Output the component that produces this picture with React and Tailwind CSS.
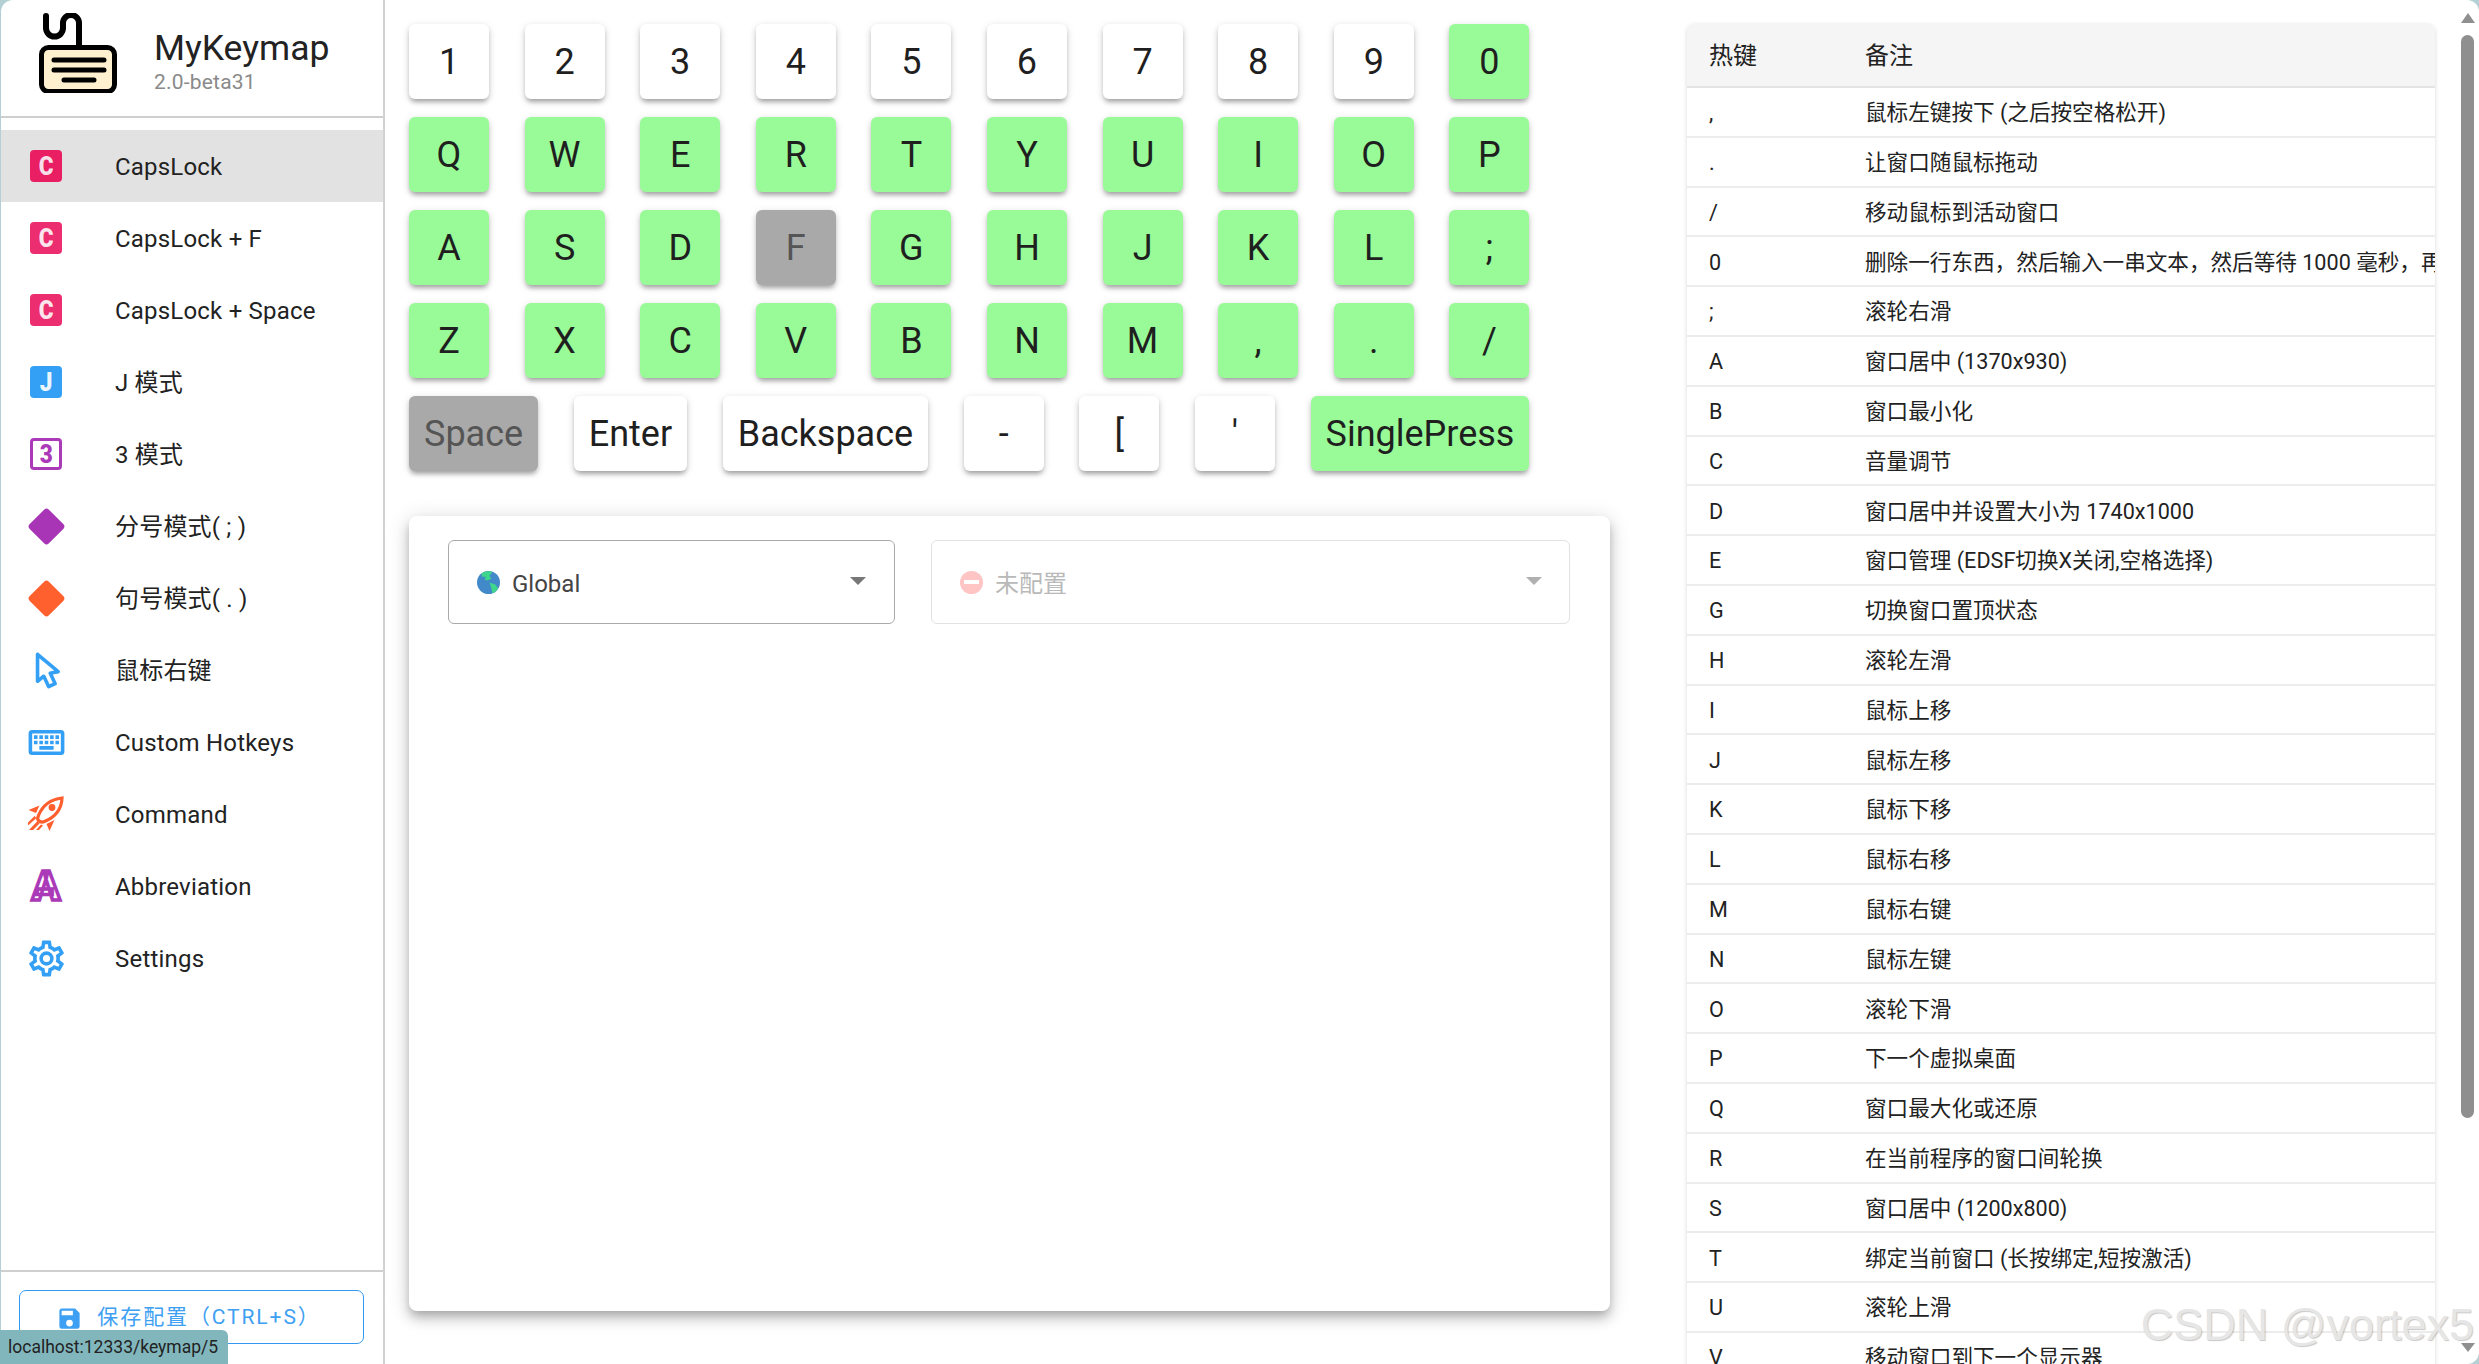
import React from 'react'

const mdi = {
  rhombus: 'M21.5 10.8L13.2 2.5C12.5 1.8 11.5 1.8 10.8 2.5L2.5 10.8C1.8 11.5 1.8 12.5 2.5 13.2L10.8 21.5C11.5 22.2 12.5 22.2 13.2 21.5L21.5 13.2C22.2 12.5 22.2 11.5 21.5 10.8Z',
  cursor: 'M10.07,14.27C10.57,14.03 11.16,14.25 11.4,14.75L13.7,19.74L15.5,18.89L13.19,13.91C12.95,13.41 13.17,12.81 13.67,12.58L13.95,12.5L16.25,12.05L8,5.12V15.9L9.82,14.43L10.07,14.27M13.64,21.97C13.14,22.21 12.54,22 12.31,21.5L10.13,16.76L7.62,18.78C7.45,18.92 7.24,19 7,19A1,1 0 0,1 6,18V3A1,1 0 0,1 7,2C7.24,2 7.47,2.09 7.64,2.23L7.65,2.22L19.14,11.86C19.57,12.22 19.62,12.85 19.27,13.27C19.12,13.45 18.91,13.57 18.7,13.61L15.54,14.23L17.74,18.96C18,19.46 17.76,20.05 17.26,20.28L13.64,21.97Z',
  keyboard: 'M4,5A2,2 0 0,0 2,7V17A2,2 0 0,0 4,19H20A2,2 0 0,0 22,17V7A2,2 0 0,0 20,5H4M4,7H20V17H4V7M5,8V10H7V8H5M8,8V10H10V8H8M11,8V10H13V8H11M14,8V10H16V8H14M17,8V10H19V8H17M5,11V13H7V11H5M8,11V13H10V11H8M11,11V13H13V11H11M14,11V13H16V11H14M17,11V13H19V11H17M8,14V16H16V14H8Z',
  cog: 'M12,8A4,4 0 0,1 16,12A4,4 0 0,1 12,16A4,4 0 0,1 8,12A4,4 0 0,1 12,8M12,10A2,2 0 0,0 10,12A2,2 0 0,0 12,14A2,2 0 0,0 14,12A2,2 0 0,0 12,10M10,22C9.75,22 9.54,21.82 9.5,21.58L9.13,18.93C8.5,18.68 7.96,18.34 7.44,17.94L4.95,18.95C4.73,19.03 4.46,18.95 4.34,18.73L2.34,15.27C2.21,15.05 2.27,14.78 2.46,14.63L4.57,12.97L4.5,12L4.57,11L2.46,9.37C2.27,9.22 2.21,8.95 2.34,8.73L4.34,5.27C4.46,5.05 4.73,4.96 4.95,5.05L7.44,6.05C7.96,5.66 8.5,5.32 9.13,5.07L9.5,2.42C9.54,2.18 9.75,2 10,2H14C14.25,2 14.46,2.18 14.5,2.42L14.87,5.07C15.5,5.32 16.04,5.66 16.56,6.05L19.05,5.05C19.27,4.96 19.54,5.05 19.66,5.27L21.66,8.73C21.79,8.95 21.73,9.22 21.54,9.37L19.43,11L19.5,12L19.43,13L21.54,14.63C21.73,14.78 21.79,15.05 21.66,15.27L19.66,18.73C19.54,18.95 19.27,19.04 19.05,18.95L16.56,17.95C16.04,18.34 15.5,18.68 14.87,18.93L14.5,21.58C14.46,21.82 14.25,22 14,22H10M11.25,4L10.88,6.61C9.68,6.86 8.62,7.5 7.85,8.39L5.44,7.35L4.69,8.65L6.8,10.2C6.4,11.37 6.4,12.64 6.8,13.8L4.68,15.36L5.43,16.66L7.86,15.62C8.63,16.5 9.68,17.14 10.87,17.38L11.24,20H12.76L13.13,17.39C14.32,17.14 15.37,16.5 16.14,15.62L18.57,16.66L19.32,15.36L17.2,13.81C17.6,12.64 17.6,11.37 17.2,10.2L19.31,8.65L18.56,7.35L16.15,8.39C15.38,7.5 14.32,6.86 13.12,6.62L12.75,4H11.25Z',
  save: 'M15,9H5V5H15M12,19A3,3 0 0,1 9,16A3,3 0 0,1 12,13A3,3 0 0,1 15,16A3,3 0 0,1 12,19M17,3H5C3.89,3 3,3.9 3,5V19A2,2 0 0,0 5,21H19A2,2 0 0,0 21,19V7L17,3Z',
}

function Mdi({ d, className }) {
  return (
    <svg viewBox="0 0 24 24" className={className} fill="currentColor">
      <path d={d} />
    </svg>
  )
}

function LetterBox({ letter, className }) {
  return (
    <div className={`flex h-8 w-8 items-center justify-center rounded-[4px] ${className}`}>
      <span className="scale-x-90 text-[25px] font-black leading-none">{letter}</span>
    </div>
  )
}

function Rocket() {
  return (
    <svg viewBox="0 0 36 36" className="h-9 w-9 text-[#ff5f2e]" fill="none" stroke="currentColor">
      <path strokeWidth="3.2" d="M10.500 24.500C9.500 23.500 9.500 21.500 10.500 19.500C14 11 21 3.500 34 2C33.500 15 25 22 16.500 25.500C14 26.500 11.500 25.500 10.500 24.500Z" />
      <circle cx="24" cy="11.500" r="3.400" fill="currentColor" stroke="none" />
      <path fill="currentColor" stroke="none" d="M11.500 9.500L0.500 14L8 17ZM26.500 24L21.500 35L18.500 28ZM6.500 20L0 26.500V29.500L8.500 22ZM9.500 25L1 34H5L11.500 27.500ZM13 28.500L8 34H11L15 29.500Z" />
    </svg>
  )
}

const menu = [
  { label: 'CapsLock', icon: <LetterBox letter="C" className="bg-[#e91e63] text-[#f6dfe8]" />, active: true },
  { label: 'CapsLock + F', icon: <LetterBox letter="C" className="bg-[#ec2d6f] text-[#fbe6ee]" /> },
  { label: 'CapsLock + Space', icon: <LetterBox letter="C" className="bg-[#ec2d6f] text-[#fbe6ee]" /> },
  { label: 'J 模式', icon: <LetterBox letter="J" className="bg-[#33a0f5] text-[#eaf5fe]" /> },
  { label: '3 模式', icon: <LetterBox letter="3" className="border-[3px] border-[#ab3ab9] text-[#ab3ab9]" /> },
  { label: '分号模式( ; )', icon: <Mdi d={mdi.rhombus} className="h-[43px] w-[43px] text-[#a735b5]" /> },
  { label: '句号模式( . )', icon: <Mdi d={mdi.rhombus} className="h-[43px] w-[43px] text-[#ff602d]" /> },
  { label: '鼠标右键', icon: <Mdi d={mdi.cursor} className="h-[43px] w-[43px] text-[#33a0f5]" /> },
  { label: 'Custom Hotkeys', icon: <Mdi d={mdi.keyboard} className="h-[43px] w-[43px] text-[#33a0f5]" /> },
  { label: 'Command', icon: <Rocket /> },
  {
    label: 'Abbreviation',
    icon: (
      <span className="text-[41px] font-black leading-none text-white [-webkit-text-stroke:3.5px_#ab3ab9]">A</span>
    ),
  },
  { label: 'Settings', icon: <Mdi d={mdi.cog} className="h-[43px] w-[43px] text-[#33a0f5]" /> },
]

const keyRows = [
  ['1', '2', '3', '4', '5', '6', '7', '8', '9', '0'],
  ['Q', 'W', 'E', 'R', 'T', 'Y', 'U', 'I', 'O', 'P'],
  ['A', 'S', 'D', 'F', 'G', 'H', 'J', 'K', 'L', ';'],
  ['Z', 'X', 'C', 'V', 'B', 'N', 'M', ',', '.', '/'],
  ['Space', 'Enter', 'Backspace', '-', '[', "'", 'SinglePress'],
]

const whiteKeys = ['1', '2', '3', '4', '5', '6', '7', '8', '9', 'Enter', 'Backspace', '-', '[', "'"]
const grayKeys = ['F', 'Space']

const hotkeys = [
  [',', '鼠标左键按下 (之后按空格松开)'],
  ['.', '让窗口随鼠标拖动'],
  ['/', '移动鼠标到活动窗口'],
  ['0', '删除一行东西，然后输入一串文本，然后等待 1000 毫秒，再'],
  [';', '滚轮右滑'],
  ['A', '窗口居中 (1370x930)'],
  ['B', '窗口最小化'],
  ['C', '音量调节'],
  ['D', '窗口居中并设置大小为 1740x1000'],
  ['E', '窗口管理 (EDSF切换X关闭,空格选择)'],
  ['G', '切换窗口置顶状态'],
  ['H', '滚轮左滑'],
  ['I', '鼠标上移'],
  ['J', '鼠标左移'],
  ['K', '鼠标下移'],
  ['L', '鼠标右移'],
  ['M', '鼠标右键'],
  ['N', '鼠标左键'],
  ['O', '滚轮下滑'],
  ['P', '下一个虚拟桌面'],
  ['Q', '窗口最大化或还原'],
  ['R', '在当前程序的窗口间轮换'],
  ['S', '窗口居中 (1200x800)'],
  ['T', '绑定当前窗口 (长按绑定,短按激活)'],
  ['U', '滚轮上滑'],
  ['V', '移动窗口到下一个显示器'],
]

function Key({ label }) {
  let color = 'bg-[#98fb98] text-[#1f1f1f]'
  if (whiteKeys.includes(label)) color = 'bg-white text-[#1f1f1f]'
  if (grayKeys.includes(label)) color = 'bg-[#a9a9a9] text-[#555555]'
  return (
    <div
      className={`flex h-[75px] min-w-[80px] items-center justify-center rounded-[6px] px-[15px] text-[36px] shadow-[0_5px_5px_-3px_rgba(0,0,0,0.22),0_3px_5px_rgba(0,0,0,0.14),0_2px_8px_rgba(0,0,0,0.12)] ${color}`}
    >
      <span className="pt-[1px]">{label}</span>
    </div>
  )
}

function Chevron({ className }) {
  return <div className={`h-0 w-0 border-x-[8px] border-t-[8px] border-x-transparent ${className}`} />
}

function Globe() {
  return (
    <svg viewBox="0 0 24 24" className="h-[23px] w-[23px]">
      <circle cx="12" cy="12" r="12" fill="#4289c9" />
      <path fill="#3ed68a" d="M5 2.500C9 0 14 0 16 1L13 5L15 8L11 10L8 9L9 6L5 6ZM13 12L19 14L22 18C20 21 18 23 16 23L15 18Z" />
    </svg>
  )
}

function StopSign() {
  return (
    <div className="flex h-[23px] w-[23px] items-center justify-center rounded-full bg-[#ffc4c4]">
      <div className="h-1 w-[15px] bg-white" />
    </div>
  )
}

function Sidebar() {
  return (
    <aside className="flex h-full w-[384px] shrink-0 flex-col border-r-2 border-[#d2d2d2]">
      <div className="flex h-[118px] shrink-0 border-b-2 border-[#cfcfcf] pl-[38px] pt-[13px]">
        <svg viewBox="0 0 80 80" className="h-20 w-20 shrink-0" fill="none" stroke="#000">
          <path strokeWidth="6" strokeLinecap="round" d="M7 3V15a8.500 8.500 0 0 0 17 0V10a8 8 0 0 1 16 0V34" />
          <rect x="2.500" y="34.500" width="73" height="44" rx="7" fill="#fff1cf" strokeWidth="5" />
          <path strokeWidth="5" strokeLinecap="round" d="M15 47H65M15 57H65M25 67H55" />
        </svg>
        <div className="ml-[35px] flex flex-col pt-[14px]">
          <div className="text-[35.5px] leading-[42px] text-[#222222]">MyKeymap</div>
          <div className="text-[21px] leading-[26px] tracking-[0.2px] text-[#8a8a8a]">2.0-beta31</div>
        </div>
      </div>
      <nav className="flex-1 pt-[12px]">
        {menu.map((item) => (
          <div key={item.label} className={`flex h-[72px] items-center ${item.active ? 'bg-[#e2e2e2]' : ''}`}>
            <div className="flex w-[90px] shrink-0 items-center justify-center">{item.icon}</div>
            <span className="pl-[24px] pt-[1px] text-[24px] tracking-[0.2px] text-[#222222]">{item.label}</span>
          </div>
        ))}
      </nav>
      <div className="h-[94px] shrink-0 border-t-2 border-[#cfcfcf] pl-[18px] pt-[18px]">
        <div className="flex h-[54px] w-[345px] items-center justify-center gap-[14px] rounded-[7px] border-[1.5px] border-[#3399ee] pr-[6px] pt-[2px] text-[21px] tracking-[1.9px] text-[#3ea0f2]">
          <Mdi d={mdi.save} className="h-[27px] w-[27px]" />
          <span>保存配置（CTRL+S）</span>
        </div>
      </div>
    </aside>
  )
}

function Keyboard() {
  return (
    <div className="flex flex-col gap-[18px]">
      {keyRows.map((row) => (
        <div key={row[0]} className="flex gap-[35.6px]">
          {row.map((k) => (
            <Key key={k} label={k} />
          ))}
        </div>
      ))}
    </div>
  )
}

function HotkeyTable() {
  return (
    <div className="mt-6 h-[1500px] w-[748px] shrink-0 overflow-hidden rounded-t-[8px] text-[21.6px] text-[#222222] shadow-[0_1px_4px_rgba(0,0,0,0.16)]">
      <div className="grid h-[64px] grid-cols-[156px_1fr] items-center border-b-2 border-[#e4e4e4] bg-[#f5f5f5] pl-[22px] pt-[2px] text-[24px]">
        <div>热键</div>
        <div>备注</div>
      </div>
      {hotkeys.map(([k, note]) => (
        <div
          key={k}
          className="grid h-[49.8px] grid-cols-[156px_1fr] items-center overflow-hidden whitespace-nowrap border-b-2 border-[#ececec] pl-[22px] pt-[3px]"
        >
          <div>{k}</div>
          <div>{note}</div>
        </div>
      ))}
    </div>
  )
}

function Scrollbar() {
  return (
    <div className="ml-[26px] flex h-full w-[13px] shrink-0 flex-col items-center pt-[13px]">
      <div className="h-0 w-0 border-x-[7px] border-b-[10px] border-x-transparent border-b-[#8f8f8f]" />
      <div className="mt-[12px] h-[1083px] w-[13px] rounded-full bg-[#8f8f8f]" />
      <div className="mb-[12px] mt-auto h-0 w-0 border-x-[7px] border-t-[9px] border-x-transparent border-t-[#8f8f8f]" />
    </div>
  )
}

export default function App() {
  return (
    <div className="relative h-screen w-full overflow-hidden bg-[#b4d0d4] font-['Roboto','Noto_Sans_CJK_SC',sans-serif]">
      <div className="ml-px flex h-full overflow-hidden rounded-[12px] bg-white">
        <Sidebar />
        <main className="flex h-full w-[1225px] shrink-0 flex-col pl-[24px] pt-[24px]">
          <Keyboard />
          <section className="mt-[45px] h-[795px] w-[1201px] rounded-[8px] bg-white pl-[39px] pt-[24px] shadow-[0_5px_8px_-3px_rgba(0,0,0,0.2),0_8px_12px_1px_rgba(0,0,0,0.14),0_3px_20px_2px_rgba(0,0,0,0.12)]">
            <div className="flex gap-[36px]">
              <div className="flex h-[84px] w-[447px] items-center rounded-[6px] border-[1.5px] border-[#aaaaaa] pl-[28px] pr-[28px] text-[24px] text-[#444444]">
                <Globe />
                <span className="ml-[12px] flex-1 pt-[3px]">Global</span>
                <Chevron className="mb-[3px] border-t-[#777777]" />
              </div>
              <div className="flex h-[84px] w-[639px] items-center rounded-[6px] border-[1.5px] border-[#e2e2e2] pl-[28px] pr-[27px] text-[24px] text-[#b9b9b9]">
                <StopSign />
                <span className="ml-[12px] flex-1 pt-[3px]">未配置</span>
                <Chevron className="mb-[3px] border-t-[#b0b0b0]" />
              </div>
            </div>
          </section>
        </main>
        <div className="flex h-full flex-1 pl-[77px]">
          <HotkeyTable />
          <Scrollbar />
        </div>
      </div>
      {/* 状态栏链接提示 */}
      <div className="absolute bottom-0 left-0 flex h-[34px] w-[228px] items-center rounded-tr-[6px] bg-[#81b6bd] pl-[8px] text-[17.5px] text-[#222222]">
        localhost:12333/keymap/5
      </div>
      <div className="absolute bottom-[17px] right-[5px] font-['Liberation_Sans',sans-serif] text-[45px] leading-none text-[#e6e6e6] [text-shadow:1px_1px_1px_rgba(0,0,0,0.22)]">
        CSDN @vortex5
      </div>
    </div>
  )
}
